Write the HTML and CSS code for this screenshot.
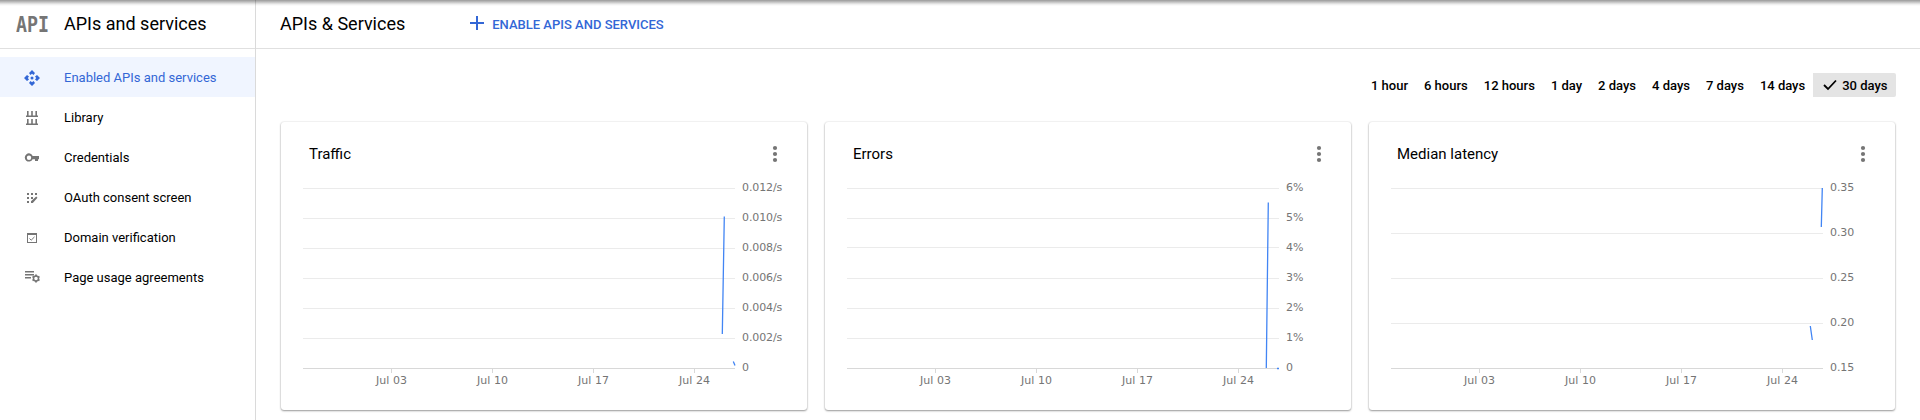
FILE: index.html
```html
<!DOCTYPE html>
<html lang="en">
<head>
<meta charset="utf-8">
<title>APIs and services</title>
<link rel="stylesheet" href="styles.css">
</head>
<body>
<div class="top-shadow"></div>
<div class="app">
  <aside class="sidebar">
    <div class="sidebar-head">
      <div class="product">API</div>
      <span>APIs and services</span>
    </div>
    <nav class="nav">
      <a class="item active">
        <svg class="icon" viewBox="0 0 16 16"><path d="M8 0l3 3-1.500 2L8 3.800 6.500 5 5 3zM8 16l3-3-1.500-2L8 12.200 6.500 11 5 13zM0 8l3-3 2 1.500L3.800 8 5 9.500 3 11zM16 8l-3-3-2 1.500L12.200 8 11 9.500l2 1.500z"/><circle cx="8" cy="8" r="1.500"/></svg>
        <span>Enabled APIs and services</span></a>
      <a class="item">
        <svg class="icon" viewBox="0 0 16 16"><path d="M3 1h1.600v5H3zM7.200 1h1.600v5H7.200zM11.400 1H13v5h-1.600zM2 5.500h12V7H2zM3 9h1.600v5H3zM7.200 9h1.600v5H7.200zM11.400 9H13v5h-1.600zM2 13.500h12V15H2z"/></svg>
        <span>Library</span></a>
      <a class="item">
        <svg class="icon" viewBox="0 0 16 16"><path fill-rule="evenodd" d="M8.700 6H15v3.200h-1V11h-3V9.200H8.600A4.100 4.100 0 1 1 8.700 6zM5 5.500a2.200 2.200 0 1 0 0 4.400a2.200 2.200 0 0 0 0-4.400z"/></svg>
        <span>Credentials</span></a>
      <a class="item">
        <svg class="icon" viewBox="0 0 16 16"><path d="M3 3h2v2H3zM7 3h2v2H7zM11 3h2v2h-2zM3 7h2v2H3zM7 7h2v2H7zM3 11h2v2H3zM7 13v-1.800L12.200 6.500 13.500 7.800 8.800 13z"/></svg>
        <span>OAuth consent screen</span></a>
      <a class="item">
        <svg class="icon" viewBox="0 0 16 16"><path fill-rule="evenodd" d="M3 3h10v10H3zM4 5v7h8V5z"/><path class="line" d="M5.500 8.500l1.700 1.700L10.500 6.900"/></svg>
        <span>Domain verification</span></a>
      <a class="item">
        <svg class="icon" viewBox="0 0 16 16"><path d="M1 1h9v1.500H1zM1 4h9v1.500H1zM1 7h6v1.500H1z"/><path class="gear" d="M12 4.500v8M8.500 6.500l7 4M15.500 6.500l-7 4"/><circle class="gear-ring" cx="12" cy="8.500" r="2.500"/></svg>
        <span>Page usage agreements</span></a>
    </nav>
  </aside>
  <main class="main">
    <header class="toolbar">
      <h1>APIs &amp; Services</h1>
      <button class="enable">
        <svg width="14" height="14" viewBox="0 0 14 14"><path d="M6 0h2v6h6v2H8v6H6V8H0V6h6z"/></svg>
        ENABLE APIS AND SERVICES
      </button>
    </header>
    <div class="ranges">
      <span>1 hour</span><span>6 hours</span><span>12 hours</span><span>1 day</span><span>2 days</span><span>4 days</span><span>7 days</span><span>14 days</span><span class="selected"><svg width="14" height="12" viewBox="0 0 14 12"><path d="M1 6l4 4L13 1.500"/></svg>30 days</span>
    </div>
    <div class="cards">
      <section class="card">
        <div class="card-head"><h2>Traffic</h2><svg width="6" height="18" viewBox="0 0 6 18"><circle cx="3" cy="3" r="2.100"/><circle cx="3" cy="9" r="2.100"/><circle cx="3" cy="15" r="2.100"/></svg></div>
        <svg class="chart" width="500" height="216" viewBox="0 0 500 216">
          <path class="grid" d="M0 10.500h432M0 40.500h432M0 70.500h432M0 100.500h432M0 130.500h432M0 160.500h432"/>
          <path class="axis" d="M0 190.500h432M88.500 191v4M189.500 191v4M290.500 191v4M391.500 191v4"/>
          <path class="series" d="M419.300 156L421.300 38.500M430.300 183.500l1.700 4"/>
          <g class="y"><text x="439" y="13">0.012/s</text><text x="439" y="43">0.010/s</text><text x="439" y="73">0.008/s</text><text x="439" y="103">0.006/s</text><text x="439" y="133">0.004/s</text><text x="439" y="163">0.002/s</text><text x="439" y="193">0</text></g>
          <g class="x"><text x="88.500" y="206">Jul 03</text><text x="189.500" y="206">Jul 10</text><text x="290.500" y="206">Jul 17</text><text x="391.500" y="206">Jul 24</text></g>
        </svg>
      </section>
      <section class="card">
        <div class="card-head"><h2>Errors</h2><svg width="6" height="18" viewBox="0 0 6 18"><circle cx="3" cy="3" r="2.100"/><circle cx="3" cy="9" r="2.100"/><circle cx="3" cy="15" r="2.100"/></svg></div>
        <svg class="chart" width="500" height="216" viewBox="0 0 500 216">
          <path class="grid" d="M0 10.500h432M0 40.500h432M0 69.500h432M0 100.500h432M0 130.500h432M0 160.500h432"/>
          <path class="axis" d="M0 190.500h432M88.500 191v4M189.500 191v4M290.500 191v4M391.500 191v4"/>
          <path class="series" d="M419.300 190L421.300 24.500M430 190.500h2"/>
          <g class="y"><text x="439" y="13">6%</text><text x="439" y="43">5%</text><text x="439" y="73">4%</text><text x="439" y="103">3%</text><text x="439" y="133">2%</text><text x="439" y="163">1%</text><text x="439" y="193">0</text></g>
          <g class="x"><text x="88.500" y="206">Jul 03</text><text x="189.500" y="206">Jul 10</text><text x="290.500" y="206">Jul 17</text><text x="391.500" y="206">Jul 24</text></g>
        </svg>
      </section>
      <section class="card">
        <div class="card-head"><h2>Median latency</h2><svg width="6" height="18" viewBox="0 0 6 18"><circle cx="3" cy="3" r="2.100"/><circle cx="3" cy="9" r="2.100"/><circle cx="3" cy="15" r="2.100"/></svg></div>
        <svg class="chart" width="500" height="216" viewBox="0 0 500 216">
          <path class="grid" d="M0 10.500h432M0 55.500h432M0 100.500h432M0 145.500h432"/>
          <path class="axis" d="M0 190.500h432M88.500 191v4M189.500 191v4M290.500 191v4M391.500 191v4"/>
          <path class="series" d="M430.300 49L431.300 10M419.300 148L421.300 162"/>
          <g class="y"><text x="439" y="13">0.35</text><text x="439" y="58">0.30</text><text x="439" y="103">0.25</text><text x="439" y="148">0.20</text><text x="439" y="193">0.15</text></g>
          <g class="x"><text x="88.500" y="206">Jul 03</text><text x="189.500" y="206">Jul 10</text><text x="290.500" y="206">Jul 17</text><text x="391.500" y="206">Jul 24</text></g>
        </svg>
      </section>
    </div>
  </main>
</div>
</body>
</html>
```

FILE: styles.css
```css
* { box-sizing: border-box; }
body {
  margin: 0;
  height: 420px;
  overflow: hidden;
  background: #fff;
  color: #000;
  font-family: Roboto, sans-serif;
  font-size: 13px;
}
h1, h2 { margin: 0; font-weight: 400; }

/* Shadow cast by the bar above the page */
.top-shadow {
  position: absolute;
  top: 0;
  left: 0;
  width: 100%;
  height: 6px;
  background: linear-gradient(rgba(0,0,0,.4), rgba(0,0,0,.24) 35%, rgba(0,0,0,.07) 70%, transparent);
}

.app { display: flex; height: 420px; }

.sidebar { width: 256px; border-right: 1px solid #dadada; }
.sidebar-head {
  display: flex;
  align-items: center;
  height: 49px;
  padding-left: 16px;
  border-bottom: 1px solid #e0e0e0;
  font-size: 18px;
}
.sidebar-head span { padding-bottom: 1px; }
.product {
  width: 40px;
  margin-right: 8px;
  padding-top: 1px;
  color: #757575;
  font: bold 22px "DejaVu Sans Mono", monospace;
  transform: scaleX(.83);
  transform-origin: left center;
}
.nav { padding-top: 8px; }
.item {
  display: flex;
  align-items: center;
  gap: 24px;
  height: 40px;
  padding: 1px 0 0 24px;
}
.icon { width: 16px; height: 16px; fill: #757575; }
.item.active { background: #f0f5ff; color: #3367d6; }
.item.active .icon { fill: #3367d6; }
.line { fill: none; stroke: #757575; stroke-width: 1; }
.gear { stroke: #757575; stroke-width: 1.800; }
.gear-ring { fill: #fff; stroke: #757575; stroke-width: 1.500; }

.main { flex: 1; }
.toolbar {
  display: flex;
  align-items: center;
  gap: 65px;
  height: 49px;
  padding-left: 24px;
  border-bottom: 1px solid #e0e0e0;
}
.toolbar h1 { padding-bottom: 1px; font-size: 18px; }
.enable {
  display: flex;
  align-items: center;
  gap: 8px;
  padding: 0;
  border: 0;
  background: none;
  color: #3367d6;
  font: 500 13px Roboto, sans-serif;
}
.enable svg { margin-bottom: 2px; fill: #3367d6; }

.ranges {
  display: flex;
  justify-content: flex-end;
  padding: 24px 24px 0 0;
  font-weight: 500;
}
.ranges span {
  display: flex;
  align-items: center;
  gap: 5px;
  height: 24px;
  padding: 0 8px;
}
.ranges .selected { background: #e4e4e4; padding: 0 8.5px 0 10px; border-radius: 0 2px 2px 0; }
.ranges svg { fill: none; stroke: #000; stroke-width: 1.800; }

.cards { display: flex; gap: 18px; padding: 25px 0 0 25px; }
.card {
  width: 526px;
  height: 288px;
  border-radius: 3px;
  box-shadow: 0 1px 2px rgba(0,0,0,.38), 0 0 2px rgba(0,0,0,.14);
}
.card-head {
  display: flex;
  align-items: center;
  justify-content: space-between;
  height: 56px;
  padding: 8px 29px 0 28px;
}
.card-head h2 { font-size: 15px; }
.card-head svg { fill: #757575; }
.chart { display: block; margin-left: 22px; }
.grid { fill: none; stroke: #ebebeb; }
.axis { fill: none; stroke: #d8d8d8; }
.series { fill: none; stroke: #4285f4; stroke-width: 1.300; }
.chart text { fill: #757575; font: 11px "DejaVu Sans", sans-serif; }
.y { letter-spacing: -.1px; }
.x { text-anchor: middle; }
```
